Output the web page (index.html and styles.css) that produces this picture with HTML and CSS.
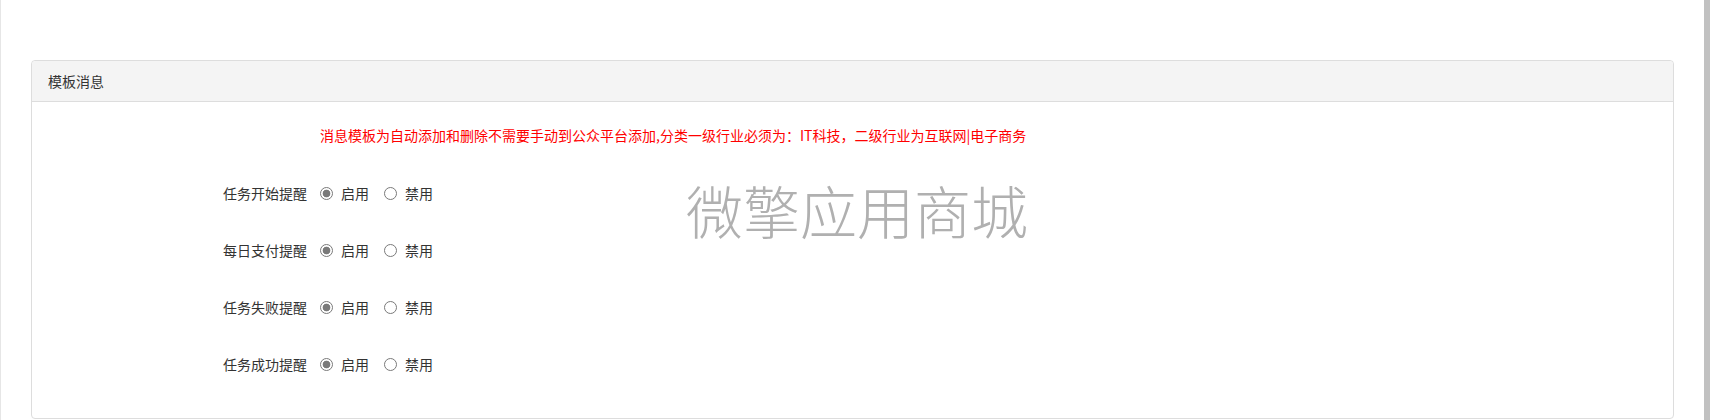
FILE: index.html
```html
<!DOCTYPE html>
<html lang="zh-CN">
<head>
  <meta charset="UTF-8" />
  <meta name="viewport" content="width=device-width, initial-scale=1.0" />
  <title>模板消息</title>
  <link rel="stylesheet" href="styles.css">
</head>
<body>

  <div class="page">
    <div class="main">
      <div class="panel">
        <div class="panel-heading">模板消息</div>
        <div class="panel-body">
          <div class="tip-row">
            <span></span>
            <p class="tip">消息模板为自动添加和删除不需要手动到公众平台添加,分类一级行业必须为：IT科技，二级行业为互联网|电子商务</p>
          </div>

          <div class="form-group">
            <label class="control-label">任务开始提醒</label>
            <div class="radios">
              <label class="radio"><input type="radio" name="start" checked> 启用</label>
              <label class="radio"><input type="radio" name="start"> 禁用</label>
            </div>
          </div>

          <div class="form-group">
            <label class="control-label">每日支付提醒</label>
            <div class="radios">
              <label class="radio"><input type="radio" name="pay" checked> 启用</label>
              <label class="radio"><input type="radio" name="pay"> 禁用</label>
            </div>
          </div>

          <div class="form-group">
            <label class="control-label">任务失败提醒</label>
            <div class="radios">
              <label class="radio"><input type="radio" name="fail" checked> 启用</label>
              <label class="radio"><input type="radio" name="fail"> 禁用</label>
            </div>
          </div>

          <div class="form-group">
            <label class="control-label">任务成功提醒</label>
            <div class="radios">
              <label class="radio"><input type="radio" name="done" checked> 启用</label>
              <label class="radio"><input type="radio" name="done"> 禁用</label>
            </div>
          </div>
        </div>

        <!-- 水印 -->
        <div class="watermark">微擎应用商城</div>
      </div>
    </div>
    <div class="scroll-bar"></div>
  </div>

</body>
</html>
```

FILE: styles.css
```css
html, body {
  margin: 0;
  height: 100%;
  overflow: hidden;
}

body {
  background-color: #fff;
  color: #333;
  font-family: "Noto Sans CJK SC", "Noto Sans", sans-serif;
  font-size: 14px;
}

.page {
  display: flex;
  height: 100%;
}

.main {
  flex: 1;
  border-left: 1px solid #e6e6e6;
  padding: 60px 30px 0 30px;
}

.scroll-bar {
  width: 6px;
  background-color: #c1c1c1;
}

.panel {
  position: relative;
  border: 1px solid #dddddd;
  border-radius: 4px;
  background-color: #fff;
}

.panel-heading {
  background-color: #f4f4f4;
  border-bottom: 1px solid #dddddd;
  border-radius: 4px 4px 0 0;
  padding: 10px 16px;
  line-height: 20px;
  color: #333;
}

.panel-body {
  padding: 23px 0 14px 0;
}

/* строки формы */
.tip-row,
.form-group {
  display: grid;
  grid-template-columns: 275px 1fr;
  column-gap: 13px;
}

.tip {
  margin: 0;
  line-height: 20px;
  color: #ff0000;
}

.tip-row {
  margin-bottom: 31px;
}

.form-group {
  height: 34px;
  line-height: 34px;
  margin-bottom: 23px;
}

.control-label {
  text-align: right;
  color: #333;
}

.radios {
  display: flex;
  align-items: center;
  gap: 15px;
}

.radio {
  display: flex;
  align-items: center;
  gap: 8px;
  cursor: pointer;
}

.radio input {
  appearance: none;
  -webkit-appearance: none;
  width: 13px;
  height: 13px;
  margin: 0;
  border: 1px solid #7a7a7a;
  border-radius: 50%;
  background-color: #fff;
}

.radio input:checked {
  background: radial-gradient(circle, #7a7a7a 0 3.5px, #fff 4.2px);
}

.watermark {
  position: absolute;
  left: 654px;
  top: 120px;
  font-size: 57px;
  font-weight: 300;
  line-height: 1;
  color: #b0b0b0;
  white-space: nowrap;
  pointer-events: none;
}
```
